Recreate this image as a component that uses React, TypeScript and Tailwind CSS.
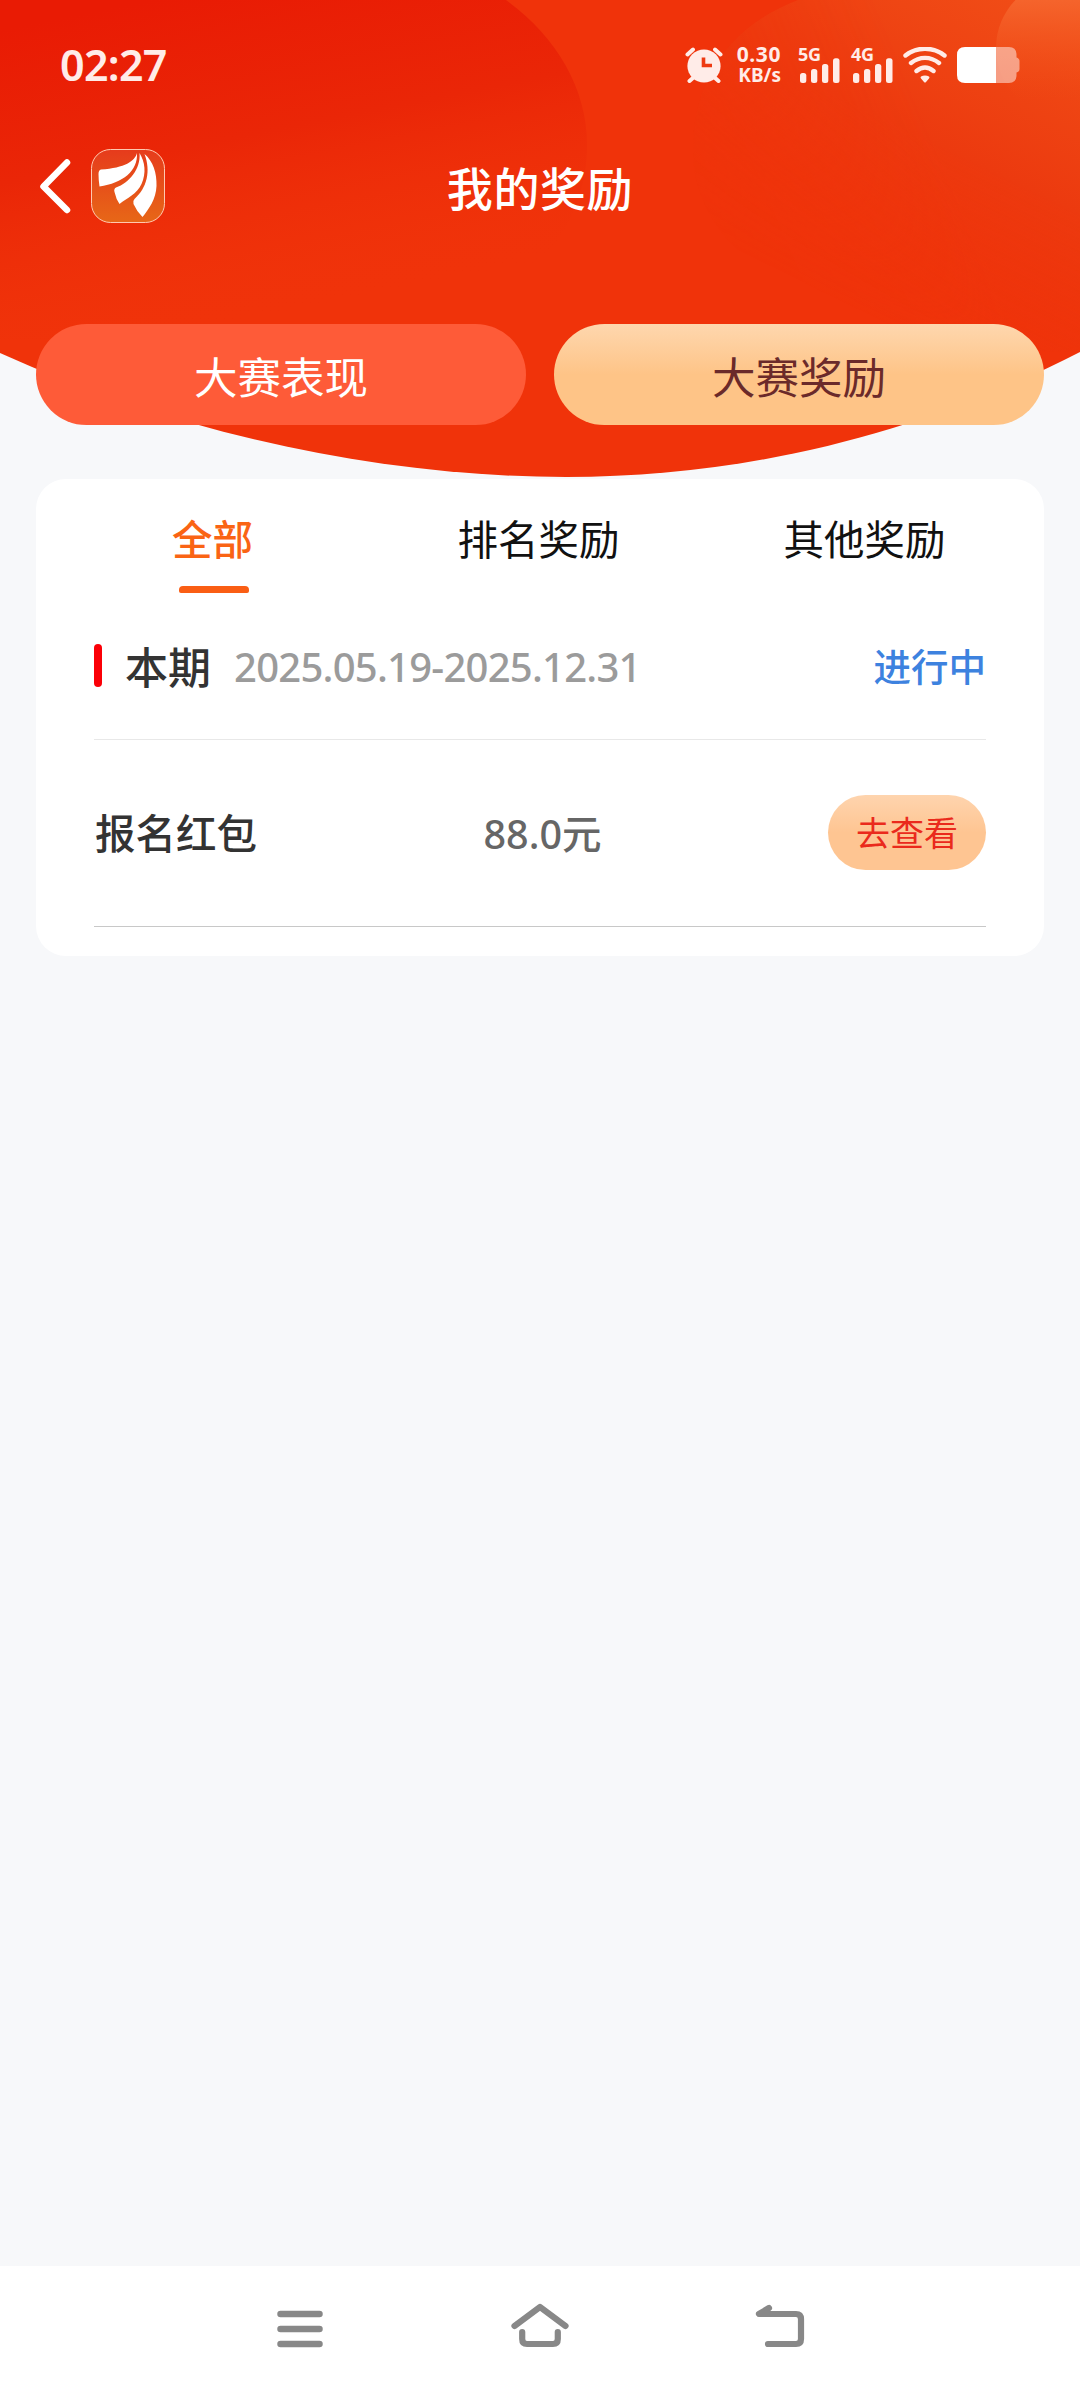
import clsx from 'clsx';

interface Reward {
  id: number;
  name: string;
  amount: string;
}

const TABS = ['全部', '排名奖励', '其他奖励'];

const REWARDS: Reward[] = [{ id: 1, name: '报名红包', amount: '88.0元' }];

/** Red header artwork, drawn behind the top of the page */
function HeaderArt() {
  return (
    <svg className="absolute left-0 top-0" width="1080" height="480" viewBox="0 0 1080 480" fill="none">
      <defs>
        <linearGradient id="left-glow" gradientUnits="userSpaceOnUse" x1="150" y1="0" x2="215" y2="330">
          <stop offset="0" stopColor="#e91b04" />
          <stop offset="0.45" stopColor="#ea2607" />
          <stop offset="1" stopColor="#f0330a" stopOpacity="0" />
        </linearGradient>
        <linearGradient id="right-glow" gradientUnits="userSpaceOnUse" x1="1060" y1="0" x2="900" y2="330">
          <stop offset="0" stopColor="#f14e17" />
          <stop offset="0.5" stopColor="#ec3a0f" />
          <stop offset="1" stopColor="#ee330b" stopOpacity="0" />
        </linearGradient>
        <linearGradient id="right-fade" gradientUnits="userSpaceOnUse" x1="690" y1="150" x2="900" y2="60">
          <stop offset="0" stopColor="#fff" stopOpacity="0.35" />
          <stop offset="1" stopColor="#fff" />
        </linearGradient>
        <mask id="right-mask" maskUnits="userSpaceOnUse" x="0" y="0" width="1080" height="480">
          <rect width="1080" height="480" fill="url(#right-fade)" />
        </mask>
        <linearGradient id="corner-glow" gradientUnits="userSpaceOnUse" x1="0" y1="0" x2="0" y2="100">
          <stop offset="0" stopColor="#f5642c" />
          <stop offset="1" stopColor="#f14c16" stopOpacity="0" />
        </linearGradient>
        <clipPath id="bowl">
          <path d="M0 0H1080V352C920 434 745 477 566 477C384 477 180 435 0 353Z" />
        </clipPath>
      </defs>
      <g clipPath="url(#bowl)">
        <rect width="1080" height="480" fill="#f0330a" />
        <path d="M0 0H506C556 36 587 88 587 145C587 260 480 340 300 340H0Z" fill="url(#left-glow)" />
        <path d="M798 0C720 30 693 90 693 150C693 260 830 350 1080 352V0Z" fill="url(#right-glow)" mask="url(#right-mask)" />
        <circle cx="1065" cy="48" r="69" fill="url(#corner-glow)" />
      </g>
    </svg>
  );
}

function Signal({ label }: { label: string }) {
  return (
    <div className="flex h-9 w-[42px] flex-col">
      <span className="h-3 text-[18px] leading-[14px] font-bold tracking-[-0.3px]">{label}</span>
      <svg className="-mt-0.5 ml-0.5" width="40" height="26" viewBox="0 0 40 26" fill="currentColor">
        <rect x="0" y="16" width="6.3" height="10" rx="2.5" />
        <rect x="11" y="12" width="6.3" height="14" rx="2.5" />
        <rect x="22" y="7" width="6.3" height="19" rx="2.5" />
        <rect x="33" y="1.3" width="6.5" height="24.7" rx="2.5" />
      </svg>
    </div>
  );
}

function StatusBar() {
  return (
    <div className="flex h-[130px] items-center pl-[60px] pr-[60px] text-[#ffece8]">
      <span className="pb-0.5 text-[43px] leading-none font-semibold tracking-[-0.7px]">02:27</span>
      <div className="ml-auto flex h-9 items-start">
        {/* Alarm */}
        <svg width="38" height="36" viewBox="0 0 38 36" fill="none">
          <circle cx="19" cy="19" r="16.6" fill="currentColor" />
          <path d="M2.5 7.5L8 2.5M35.5 7.5L30 2.5M4.5 34L9 30M33.5 34L29 30" stroke="currentColor" strokeWidth="4" strokeLinecap="round" />
          <path d="M18.5 10.5V18.5H27" stroke="#ee3a12" strokeWidth="3.6" />
        </svg>
        <div className="-mt-1 ml-[12px] flex w-[46px] flex-col items-end font-bold">
          <span className="text-[21px] leading-[22px] tracking-[0.6px]">0.30</span>
          <span className="text-[19px] leading-[20px]">KB/s</span>
        </div>
        <div className="ml-[17px]">
          <Signal label="5G" />
        </div>
        <div className="ml-[11px]">
          <Signal label="4G" />
        </div>
        {/* Wifi */}
        <svg className="ml-[10px]" width="44" height="36" viewBox="0 0 44 36" fill="none">
          <path d="M2.5 8.5C13.5-0.5 30.5-0.5 41.5 8.5M8 16C16.5 9.2 27.5 9.2 36 16M13.5 24C19 19.5 25 19.5 30.5 24" stroke="currentColor" strokeWidth="4.4" strokeLinecap="round" />
          <path d="M18 29.5C20.5 28.3 23.5 28.3 26 29.5Q27 30.5 26 31.5L23 35Q22 36 21 35L18 31.5Q17 30.5 18 29.5Z" fill="currentColor" />
        </svg>
        {/* Battery */}
        <svg className="ml-[10px]" width="63" height="36" viewBox="0 0 63 36" fill="none">
          <path d="M39 0H52Q59 0 59.5 7V10.5Q62.5 11.5 62.5 14V22Q62.5 24.500 59.5 25.5V29Q59 36 52 36H39Z" fill="#fff" fillOpacity="0.48" />
          <path d="M8 0H39V36H8Q0 36 0 28V8Q0 0 8 0Z" fill="#fff" />
        </svg>
      </div>
    </div>
  );
}

function AppLogo() {
  return (
    <svg width="74" height="74" viewBox="0 0 74 74" fill="none">
      <defs>
        <linearGradient id="logo-bg" x1="0" y1="0" x2="0" y2="1">
          <stop offset="0" stopColor="#e63b1c" />
          <stop offset="1" stopColor="#e76717" />
        </linearGradient>
      </defs>
      <rect x="0.5" y="0.5" width="73" height="73" rx="19" fill="url(#logo-bg)" stroke="#ffc9b0" />
      <path d="M46 4C44 12 34 19 10 20.5Q7.500 21 7.500 25Q7.500 31 8.500 37.5C32 34 47 22 46 4Z" fill="#fff" />
      <path d="M48.500 4C50 20 38 34 25 38.5Q22.500 40 23.500 43Q25 50 28.500 55C36 49 46 45 50.500 35C55.500 24 54 13 48.500 4Z" fill="#fff" />
      <path d="M53.500 5C60 22 56 39 43.500 50Q41.500 52 42.500 55Q45.500 62 51.500 68C58 60 65 50 65.500 37C66 24 62 12 53.500 5Z" fill="#fff" />
    </svg>
  );
}

function NavBar() {
  return (
    <div className="flex h-[112px] items-center">
      <div className="flex w-[200px] items-center pl-[38px]">
        <svg width="34" height="60" viewBox="0 0 34 60" fill="none">
          <path d="M29 6.5L5.5 30.5L29 54" stroke="#fff" strokeWidth="6.5" strokeLinecap="round" strokeLinejoin="round" />
        </svg>
        <div className="ml-[19px]">
          <AppLogo />
        </div>
      </div>
      <h1 className="flex-1 pt-1 text-center text-[46px] leading-[56px] font-medium tracking-[0.6px] text-white">我的奖励</h1>
      <div className="w-[200px]" />
    </div>
  );
}

function SystemNav() {
  return (
    <div className="flex h-[126px] items-start justify-center gap-[180px] bg-white pt-[33px]">
      <svg width="60" height="60" viewBox="270 2299 60 60" fill="none" stroke="#888" strokeWidth="6.5" strokeLinecap="round">
        <path d="M280.5 2314H319.5M280.5 2329H319.5M280.5 2344H319.5" />
      </svg>
      <svg width="60" height="60" viewBox="510 2299 60 60" fill="none" stroke="#888" strokeWidth="6.2" strokeLinecap="round" strokeLinejoin="round">
        <path d="M514.5 2326L540 2307L565.5 2326M522.2 2332V2339Q522.2 2344 527 2344H553Q557.8 2344 557.8 2339V2332" />
      </svg>
      <svg width="60" height="60" viewBox="750 2299 60 60" fill="none" stroke="#888" strokeWidth="6.2" strokeLinecap="round" strokeLinejoin="round">
        <path d="M769 2308L759 2314H796Q801 2314 801 2319V2339Q801 2344 796 2344H768" />
      </svg>
    </div>
  );
}

export default function App() {
  return (
    <div className="relative flex h-[2392px] w-[1080px] flex-col bg-[#f7f8fa] font-['Noto_Sans','Noto_Sans_CJK_SC',sans-serif]">
      <HeaderArt />
      <div className="relative flex flex-1 flex-col">
        <StatusBar />
        <NavBar />

        {/* Section switch */}
        <div className="mt-[82px] flex gap-7 px-9">
          <button className="h-[101px] flex-1 rounded-full bg-[#fe5b38] pt-1.5 text-[43.5px] text-white">大赛表现</button>
          <button className="h-[101px] flex-1 rounded-full bg-linear-to-b from-[#fed7ae] to-[#fec487] to-50% pt-1.5 text-[43.5px] text-[#6b2a2a]">
            大赛奖励
          </button>
        </div>

        {/* Rewards card */}
        <div className="mx-9 mt-[54px] rounded-[30px] bg-white pb-[29px]">
          <div className="flex px-[15px] pt-[38px]">
            {TABS.map((tab, index) => (
              <div key={tab} className="flex flex-1 flex-col items-center">
                <span className={clsx('pr-[3px] text-[40.5px] leading-[46px]', index === 0 ? 'font-medium text-[#fa6414]' : 'text-[#111]')}>
                  {tab}
                </span>
                <span className={clsx('mt-[23px] h-[7px] w-[70px] rounded-t-[4px] rounded-b-[2px]', index === 0 && 'bg-[#fa5e14]')} />
              </div>
            ))}
          </div>

          <div className="mx-[58px] flex h-[147px] items-center border-b border-[#e8e8e8]">
            <span className="mb-0.5 h-[43px] w-2 rounded-full bg-[#fb0007]" />
            <span className="ml-[23px] pt-0.5 text-[43px] leading-none font-medium text-[#333]">本期</span>
            <span className="ml-[23px] pt-0.5 text-[40px] leading-none font-medium tracking-[-0.75px] text-[#9b9b9b]">2025.05.19-2025.12.31</span>
            <span className="ml-auto pt-0.5 text-[37.5px] leading-none font-medium text-[#3d82df]">进行中</span>
          </div>

          {REWARDS.map(reward => (
            <div key={reward.id} className="mx-[58px] grid h-[187px] grid-cols-3 items-center border-b border-[#c8c8c8]">
              <span className="pt-[3px] pl-px text-[40.5px] leading-none font-medium text-[#333]">{reward.name}</span>
              <span className="pt-[3px] pl-[5px] text-center text-[39.5px] leading-none font-medium text-[#666]">{reward.amount}</span>
              <button className="mb-px h-[75px] w-[158px] justify-self-end rounded-full bg-linear-to-b from-[#fed4ae] to-[#fec592] to-50% pt-0.5 text-[34px] text-[#ea2a1c]">
                去查看
              </button>
            </div>
          ))}
        </div>
      </div>
      <SystemNav />
    </div>
  );
}
